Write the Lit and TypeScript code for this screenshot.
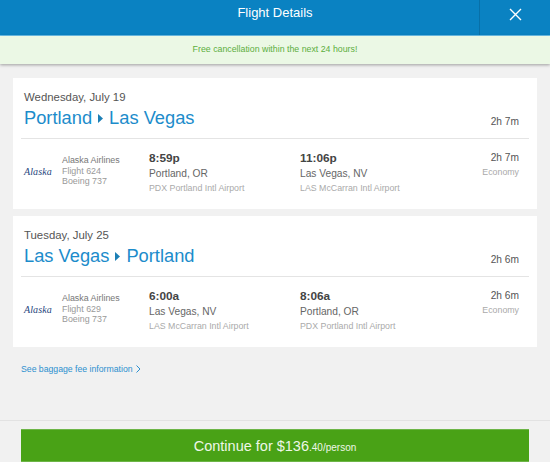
import { LitElement, html, css } from "lit";
import { customElement } from "lit/decorators.js";

const legs = [
  { date: "Wednesday, July 19", from: "Portland", to: "Las Vegas", total: "2h 7m", flight: "Flight 624",
    dep: "8:59p", depCity: "Portland, OR", depAir: "PDX Portland Intl Airport",
    arr: "11:06p", arrCity: "Las Vegas, NV", arrAir: "LAS McCarran Intl Airport" },
  { date: "Tuesday, July 25", from: "Las Vegas", to: "Portland", total: "2h 6m", flight: "Flight 629",
    dep: "6:00a", depCity: "Las Vegas, NV", depAir: "LAS McCarran Intl Airport",
    arr: "8:06a", arrCity: "Portland, OR", arrAir: "PDX Portland Intl Airport" },
];

@customElement("app-root")
export class AppRoot extends LitElement {
  static styles = css`
    :host { display: flex; flex-direction: column; width: 550px; height: 462px; overflow: hidden; background: #f1f1f1; font-family: "Liberation Sans", Arial, sans-serif; color: #444; }
    .head { height: 35px; flex: none; background: #0a82c2; color: #fff; display: grid; grid-template-columns: 1fr 71px; position: relative; border-bottom: 1px solid #6cc0ea; }
    .title { font-size: 13px; line-height: 26px; text-align: center; padding-left: 71px; }
    .close { border-left: 1px solid #0870a8; display: flex; align-items: center; justify-content: center; padding-bottom: 6px; }
    .banner { height: 28px; flex: none; background: #ebf8e5; color: #5cae40; font-size: 8.8px; line-height: 27px; text-align: center; box-shadow: 0 1px 3px rgba(0,0,0,.35); position: relative; }
    .main { flex: 1; display: flex; flex-direction: column; gap: 7px; padding: 14px 13px 0; }
    .card { background: #fff; height: 131px; padding: 0 8px; box-sizing: border-box; }
    .top { display: grid; grid-template-columns: 1fr auto; height: 60px; border-bottom: 1px solid #e4e4e4; padding: 0 10px 0 3px; }
    .date { font-size: 11.4px; line-height: 14px; padding-top: 12px; color: #555; }
    .route { font-size: 18.3px; line-height: 22px; color: #1c8ccb; display: flex; align-items: center; gap: 6px; padding-top: 3px; }
    .total { font-size: 10.2px; color: #555; align-self: end; padding-bottom: 11px; }
    .seg { display: grid; grid-template-columns: 38px 87px 151px 1fr auto; padding: 12px 10px 0 3px; }
    .logo { font-family: "Liberation Serif", serif; font-style: italic; font-size: 10px; color: #27467e; padding-top: 15px; line-height: 12px; letter-spacing: .1px; }
    .air { font-size: 8.9px; line-height: 10.7px; color: #999; padding-top: 4px; }
    .air b { font-weight: normal; color: #777; display: block; }
    .time { font-size: 11.8px; font-weight: bold; line-height: 14px; color: #444; }
    .city { font-size: 10.2px; line-height: 17px; color: #666; }
    .ap { font-size: 8.8px; line-height: 12px; color: #aaa; }
    .dur { text-align: right; font-size: 10.2px; line-height: 14px; color: #555; }
    .cls { font-size: 8.8px; line-height: 15px; color: #aaa; }
    .link { font-size: 8.7px; color: #2c90cf; margin: 9px 0 0 8px; display: flex; align-items: center; gap: 3px; line-height: 12px; }
    .foot { flex: none; height: 42px; border-top: 1px solid #e2e2e2; padding: 8px 21px 0; box-sizing: border-box; }
    .btn { height: 33px; background: #49a216; color: #eef7e8; border: 1px solid #6db547; border-width: 1px 0; display: flex; justify-content: center; align-items: center; font-size: 14.5px; box-sizing: border-box; padding-top: 1px; }
    .btn small { font-size: 10px; padding-top: 2px; }
  `;

  render() {
    return html`
      <div class="head">
        <div class="title">Flight Details</div>
        <div class="close"><svg width="13" height="13" viewBox="0 0 13 13"><path d="M1 1 12 12M12 1 1 12" stroke="#fff" stroke-width="1.4" fill="none"/></svg></div>
      </div>
      <div class="banner">Free cancellation within the next 24 hours!</div>
      <div class="main">
        ${legs.map((l) => html`
          <div class="card">
            <div class="top">
              <div>
                <div class="date">${l.date}</div>
                <div class="route">${l.from}<svg width="5" height="9" viewBox="0 0 5 9"><path d="M0 0 5 4.5 0 9Z" fill="#1c7fb5"/></svg>${l.to}</div>
              </div>
              <div class="total">${l.total}</div>
            </div>
            <div class="seg">
              <div class="logo">Alaska</div>
              <div class="air"><b>Alaska Airlines</b>${l.flight}<br />Boeing 737</div>
              <div><div class="time">${l.dep}</div><div class="city">${l.depCity}</div><div class="ap">${l.depAir}</div></div>
              <div><div class="time">${l.arr}</div><div class="city">${l.arrCity}</div><div class="ap">${l.arrAir}</div></div>
              <div class="dur">${l.total}<div class="cls">Economy</div></div>
            </div>
          </div>`)}
        <div class="link">See baggage fee information<svg width="5" height="8" viewBox="0 0 5 8"><path d="M.5.5 4 4 .5 7.5" stroke="#2c90cf" fill="none"/></svg></div>
      </div>
      <div class="foot"><div class="btn">Continue for $136<small>.40/person</small></div></div>
    `;
  }
}
